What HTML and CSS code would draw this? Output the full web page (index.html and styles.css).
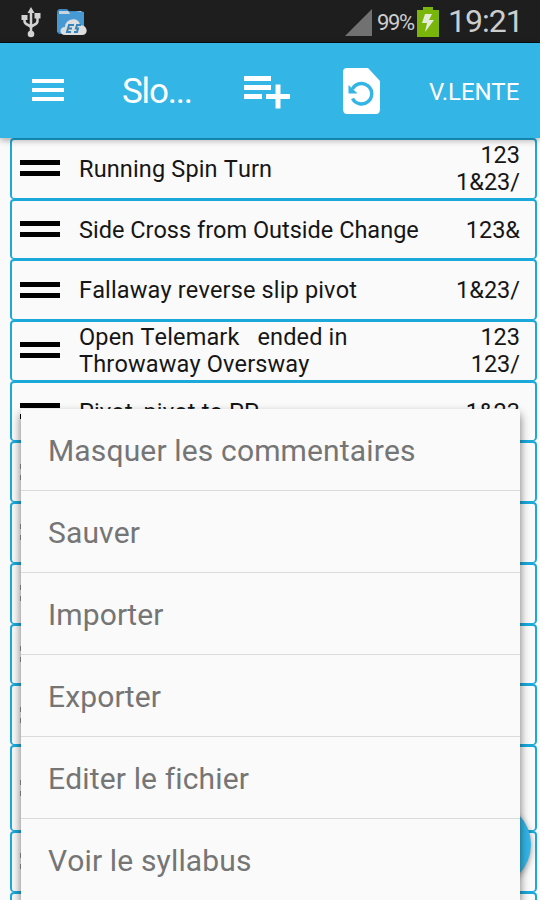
FILE: index.html
```html
<!DOCTYPE html>
<html lang="fr">
  <head>
    <meta charset="utf-8">
    <title>Slow</title>
    <link rel="stylesheet" href="styles.css">
  </head>
  <body>
    <div class="screen">
      <div class="status-bar">
        <svg class="usb" width="20" height="32" viewBox="0 0 20 32" fill="none" stroke="#d2d2d2" stroke-width="2.500">
          <path d="M10 5v22M3.500 11v3c0 5 6.500 3 6.500 7M16.500 10v4c0 5-6.500 3-6.500 7"/>
          <path d="M10 0l3.500 6h-7zM0.500 8h6v5h-6zM13.500 6h6v5.500h-6z" fill="#d2d2d2" stroke="none"/>
          <circle cx="10" cy="27" r="3.300" fill="#d2d2d2" stroke="none"/>
        </svg>
        <svg class="explorer" width="32" height="28" viewBox="0 0 32 28">
          <path d="M1 3l2-2h8l2 2h13l2 2v19l-3 2H3l-2-2z" fill="#3c87c1"/>
          <path d="M3 3h9l2 2 11-2v3H3z" fill="#c8d5df"/>
          <path d="M1 6h12l3-2h12v20H1z" fill="#4799d4"/>
          <path d="M9 27c-6 0-6-8 0-8 0-9 14-11 15-2 8 0 9 10 2 10z" fill="#dedede"/>
          <path d="M18 17h-5l-2 7h4M13 20.500h3M25 17h-4l-1 3.500h2l-1 3.500h-3" fill="none" stroke="#3684ba" stroke-width="2"/>
        </svg>
        <svg class="signal" width="27" height="27" viewBox="0 0 27 27"><path d="M27 0v27H0z" fill="#717171"/></svg>
        <span class="percent">99%</span>
        <svg class="battery" width="22" height="30" viewBox="0 0 22 30">
          <path d="M6 0h10v3h6v27H0V3h6z" fill="#79b50b"/>
          <path d="M8 7h7l-3 6h5L8 25l2-9H5z" fill="#e4ecd9"/>
        </svg>
        <span class="clock">19:21</span>
      </div>

      <div class="app-bar">
        <svg class="menu-icon" width="32" height="24" viewBox="0 0 32 24"><path d="M0 3h32M0 12h32M0 21h32" stroke="#fff" stroke-width="4"/></svg>
        <span class="title">Slo...</span>
        <svg class="add-icon" width="46" height="34" viewBox="0 0 46 34" fill="none" stroke="#fff">
          <path d="M0 3.500h27M0 12.500h27M0 21.500h18" stroke-width="5"/>
          <path d="M22 21.500h24M34 9.500v24" stroke-width="5"/>
        </svg>
        <svg class="restore-icon" width="37" height="46" viewBox="0 0 37 46">
          <path d="M4 0h21l12 13v28q0 5-4 5H4q-4 0-4-5V4q0-4 4-4z" fill="#fff"/>
          <path d="M9.500 21a10.200 10.200 0 1 1 0 9.500" fill="none" stroke="#33b5e5" stroke-width="3.400"/>
          <path d="M5.500 17v8.500h9z" fill="#33b5e5"/>
        </svg>
        <span class="action">V.LENTE</span>
      </div>

      <div class="list">
        <div class="row"><i class="handle"></i><span class="name">Running Spin Turn</span><span class="count">123<br>1&amp;23/</span></div>
        <div class="row"><i class="handle"></i><span class="name long">Side Cross from Outside Change</span><span class="count">123&amp;</span></div>
        <div class="row"><i class="handle"></i><span class="name">Fallaway reverse slip pivot</span><span class="count">1&amp;23/</span></div>
        <div class="row"><i class="handle"></i><span class="name">Open Telemark &nbsp; ended in<br>Throwaway Oversway</span><span class="count">123<br>123/</span></div>
        <div class="row"><i class="handle"></i><span class="name">Pivot, pivot to PP</span><span class="count">1&amp;23</span></div>
        <div class="row"><i class="handle faded"></i></div>
        <div class="row"><i class="handle faded"></i></div>
        <div class="row"><i class="handle faded"></i></div>
        <div class="row"><i class="handle faded"></i></div>
        <div class="row"><i class="handle faded"></i></div>
        <div class="row tall"><i class="handle faded"></i></div>
        <div class="row"><i class="handle faded"></i></div>
        <div class="row"><i class="handle faded"></i></div>
      </div>

      <div class="fab"></div>

      <div class="popup">
        <div class="item">Masquer les commentaires</div>
        <div class="item">Sauver</div>
        <div class="item">Importer</div>
        <div class="item">Exporter</div>
        <div class="item">Editer le fichier</div>
        <div class="item">Voir le syllabus</div>
      </div>
    </div>
  </body>
</html>
```
FILE: styles.css
```css
body {
  margin: 0;
  font-family: Roboto, sans-serif;
}

.screen {
  position: relative;
  width: 540px;
  height: 900px;
  overflow: hidden;
  background: #fafafa;
}

.status-bar {
  display: flex;
  align-items: center;
  box-sizing: border-box;
  height: 43px;
  padding-left: 21px;
  background: #1e1e1e;
  border-bottom: 1px solid #050e12;
  color: #cdcdcd;
}

.usb {
  margin-top: 3px;
}

.explorer {
  margin: 1px 0 0 15px;
}

.signal {
  margin: 3px 0 0 257px;
}

.percent {
  width: 40px;
  margin: 3px 0 0 5px;
  font-size: 22px;
  letter-spacing: -1.4px;
}

.battery {
  margin-top: 2px;
}

.clock {
  margin-left: 9px;
  font-size: 32px;
  line-height: 42px;
  letter-spacing: -1px;
}

.app-bar {
  position: relative;
  z-index: 1;
  display: flex;
  align-items: center;
  height: 95px;
  padding-left: 32px;
  background: #33b5e5;
  box-shadow: 0 2px 7px rgba(0, 0, 0, 0.35);
  color: #fff;
}

.menu-icon {
  margin-bottom: 2px;
}

.title {
  width: 86px;
  margin: 2px 0 0 58px;
  font-size: 35px;
  letter-spacing: -1.2px;
}

.add-icon {
  margin: 3px 0 0 36px;
}

.restore-icon {
  margin-left: 53px;
}

.action {
  margin: 2px 0 0 49px;
  font-size: 24px;
}

.list {
  display: flex;
  flex-direction: column;
  padding: 0 3px 0 10px;
}

.row {
  display: flex;
  flex: none;
  align-items: center;
  box-sizing: border-box;
  height: 60.7px;
  padding: 0 15px 0 8px;
  border: 2px solid #1ba9da;
  border-bottom-width: 1px;
  border-radius: 4px;
  color: #161616;
  font-size: 23.5px;
  line-height: 27px;
}

.tall {
  height: 86px;
}

.handle {
  box-sizing: border-box;
  width: 40px;
  height: 16px;
  margin: 0 19px 1px 0;
  border: solid #000;
  border-width: 5px 0;
}

.faded {
  border-color: #999;
}

.name {
  flex: 1;
  padding-top: 1px;
  font-kerning: none;
  letter-spacing: 0.15px;
  white-space: nowrap;
}

.long {
  letter-spacing: 0;
}

.count {
  padding-top: 1px;
  text-align: right;
}

.fab {
  position: absolute;
  left: 446px;
  top: 802px;
  width: 85px;
  height: 85px;
  border-radius: 50%;
  background: #33b5e5;
  box-shadow: 0 2px 6px rgba(0, 0, 0, 0.4);
}

/* overflow menu, runs past the bottom of the screen */
.popup {
  position: absolute;
  z-index: 2;
  left: 21px;
  top: 408.5px;
  width: 499px;
  background: #fafafa;
  border-radius: 3px;
  box-shadow: 0 5px 10px rgba(0, 0, 0, 0.55);
}

.item {
  box-sizing: border-box;
  height: 82.2px;
  padding-left: 27px;
  border-bottom: 1px solid #dadada;
  color: #757575;
  font-size: 30px;
  font-kerning: none;
  letter-spacing: 0.15px;
  line-height: 84px;
  white-space: nowrap;
}
```
